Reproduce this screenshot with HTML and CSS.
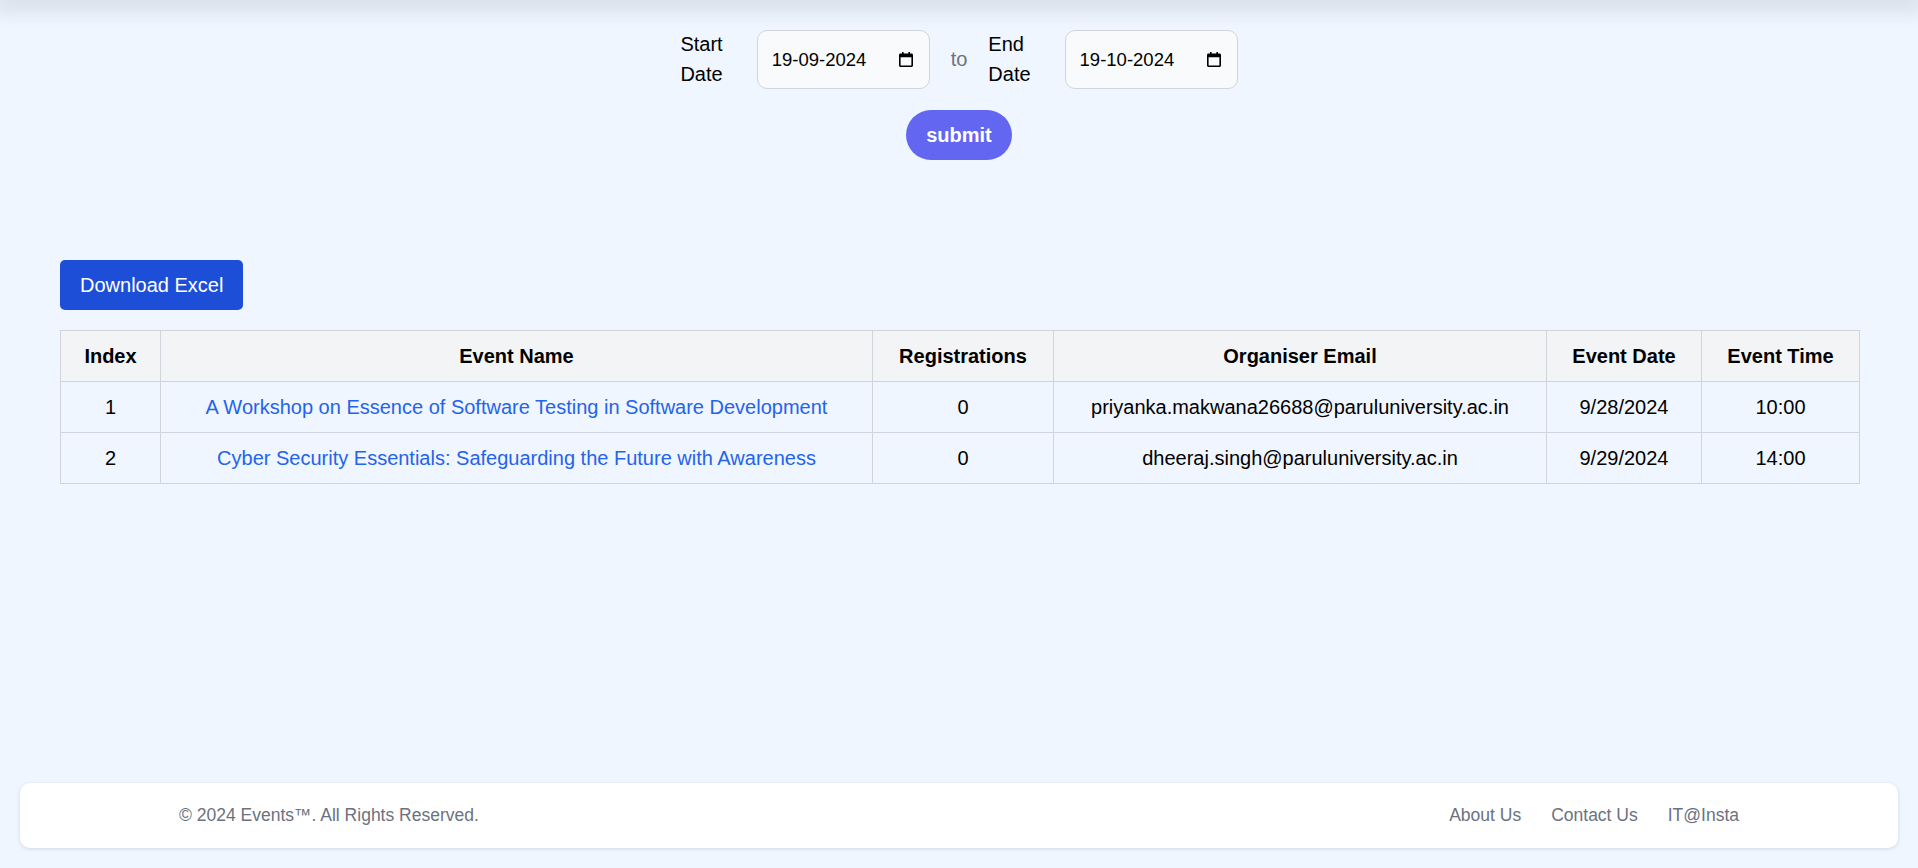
FILE: index.html
```html
<!DOCTYPE html>
<html lang="en">
<head>
<meta charset="utf-8">
<title>Events Report</title>
<link rel="stylesheet" href="styles.css">
</head>
<body>
<div class="topbar"></div>
<main class="main">
  <form class="range-form">
    <div class="range-row">
      <label class="range-label">Start Date</label>
      <div class="date-field">
        <span class="date-value">19-09-2024</span>
        <svg class="cal-icon" width="14" height="15" viewBox="0 0 14 15" aria-hidden="true"><path fill-rule="evenodd" fill="#000" d="M3 0h1.6v1.6h4.8V0H11v1.6h1.6A1.4 1.4 0 0 1 14 3v10.6a1.4 1.4 0 0 1-1.4 1.4H1.4A1.4 1.4 0 0 1 0 13.6V3a1.4 1.4 0 0 1 1.4-1.4H3zM1.6 5.2v8.2h10.8V5.2z"/></svg>
      </div>
      <span class="range-to">to</span>
      <label class="range-label">End Date</label>
      <div class="date-field">
        <span class="date-value">19-10-2024</span>
        <svg class="cal-icon" width="14" height="15" viewBox="0 0 14 15" aria-hidden="true"><path fill-rule="evenodd" fill="#000" d="M3 0h1.6v1.6h4.8V0H11v1.6h1.6A1.4 1.4 0 0 1 14 3v10.6a1.4 1.4 0 0 1-1.4 1.4H1.4A1.4 1.4 0 0 1 0 13.6V3a1.4 1.4 0 0 1 1.4-1.4H3zM1.6 5.2v8.2h10.8V5.2z"/></svg>
      </div>
    </div>
    <button type="button" class="submit-btn">submit</button>
  </form>

  <section class="report">
    <button type="button" class="download-btn">Download Excel</button>
    <table class="events-table">
      <colgroup>
        <col class="col-index">
        <col class="col-name">
        <col class="col-reg">
        <col class="col-email">
        <col class="col-date">
        <col class="col-time">
      </colgroup>
      <thead>
        <tr>
          <th>Index</th>
          <th>Event Name</th>
          <th>Registrations</th>
          <th>Organiser Email</th>
          <th>Event Date</th>
          <th>Event Time</th>
        </tr>
      </thead>
      <tbody>
        <tr>
          <td>1</td>
          <td><a class="event-link" href="#">A Workshop on Essence of Software Testing in Software Development</a></td>
          <td>0</td>
          <td>priyanka.makwana26688@paruluniversity.ac.in</td>
          <td>9/28/2024</td>
          <td>10:00</td>
        </tr>
        <tr>
          <td>2</td>
          <td><a class="event-link" href="#">Cyber Security Essentials: Safeguarding the Future with Awareness</a></td>
          <td>0</td>
          <td>dheeraj.singh@paruluniversity.ac.in</td>
          <td>9/29/2024</td>
          <td>14:00</td>
        </tr>
      </tbody>
    </table>
  </section>
</main>

<footer class="footer">
  <div class="footer-inner">
    <span class="copyright">© 2024 Events™. All Rights Reserved.</span>
    <ul class="footer-links">
      <li><a href="#">About Us</a></li>
      <li><a href="#">Contact Us</a></li>
      <li><a href="#">IT@Insta</a></li>
    </ul>
  </div>
</footer>
</body>
</html>
```

FILE: styles.css
```css
* {
  box-sizing: border-box;
}

html, body {
  margin: 0;
  padding: 0;
}

body {
  min-height: 100vh;
  display: flex;
  flex-direction: column;
  background: #eff6ff;
  font-family: "Liberation Sans", Arial, sans-serif;
  font-size: 20px;
  line-height: 30px;
  color: #000;
  overflow: hidden;
}

.topbar {
  height: 0;
  width: 100%;
  box-shadow: 0 0 22px 8px rgba(30, 41, 59, 0.16);
}

.main {
  flex: 1;
  display: flex;
  flex-direction: column;
}

/* date range form */
.range-form {
  display: flex;
  flex-direction: column;
  align-items: center;
  padding-top: 29px;
  margin: 0;
}

.range-row {
  display: flex;
  align-items: center;
}

.range-label {
  width: min-content;
  margin-right: 34px;
  font-size: 20px;
  line-height: 30px;
}

.date-field {
  width: 173px;
  height: 59px;
  display: flex;
  align-items: center;
  justify-content: space-between;
  padding: 0 16px 0 14px;
  background: #f9fafb;
  border: 1px solid #d1d5db;
  border-radius: 10px;
  font-size: 18.5px;
  line-height: 25px;
  color: #000;
}

.cal-icon {
  display: block;
  flex: none;
}

.range-to {
  margin: 0 21px;
  color: #6b7280;
}

.submit-btn {
  margin-top: 21px;
  height: 50px;
  padding: 0 20px;
  border: none;
  border-radius: 9999px;
  background: #6366f1;
  color: #fff;
  font-family: inherit;
  font-size: 20px;
  font-weight: 700;
  line-height: 30px;
  cursor: pointer;
}

/* report */
.report {
  margin-top: 100px;
  padding: 0 59px 0 60px;
  display: flex;
  flex-direction: column;
  align-items: flex-start;
  gap: 20px;
}

.download-btn {
  height: 50px;
  padding: 0 20px;
  border: none;
  border-radius: 5px;
  background: #1d4ed8;
  color: #fff;
  font-family: inherit;
  font-size: 20px;
  line-height: 30px;
  cursor: pointer;
}

.events-table {
  width: 100%;
  table-layout: fixed;
  border-collapse: collapse;
}

.col-index { width: 100px; }
.col-name { width: 712px; }
.col-reg { width: 181px; }
.col-email { width: 493px; }
.col-date { width: 155px; }
.col-time { width: 158px; }

.events-table th,
.events-table td {
  border: 1px solid #d1d5db;
  padding: 10px 8px;
  height: 51px;
  text-align: center;
  font-size: 20px;
  line-height: 30px;
  white-space: nowrap;
}

.events-table th {
  background: #f3f4f6;
  font-weight: 700;
}

.event-link {
  color: #2563eb;
  text-decoration: none;
}

/* footer */
.footer {
  margin: 20px;
  background: #fff;
  border-radius: 10px;
  box-shadow: 0 1px 4px rgba(0, 0, 0, 0.12);
}

.footer-inner {
  max-width: 1600px;
  margin: 0 auto;
  padding: 20px;
  display: flex;
  align-items: center;
  justify-content: space-between;
  font-size: 17.5px;
  line-height: 25px;
  color: #6b7280;
}

.footer-links {
  display: flex;
  list-style: none;
  margin: 0;
  padding: 0;
  gap: 30px;
}

.footer-links a {
  color: #6b7280;
  text-decoration: none;
}
```
